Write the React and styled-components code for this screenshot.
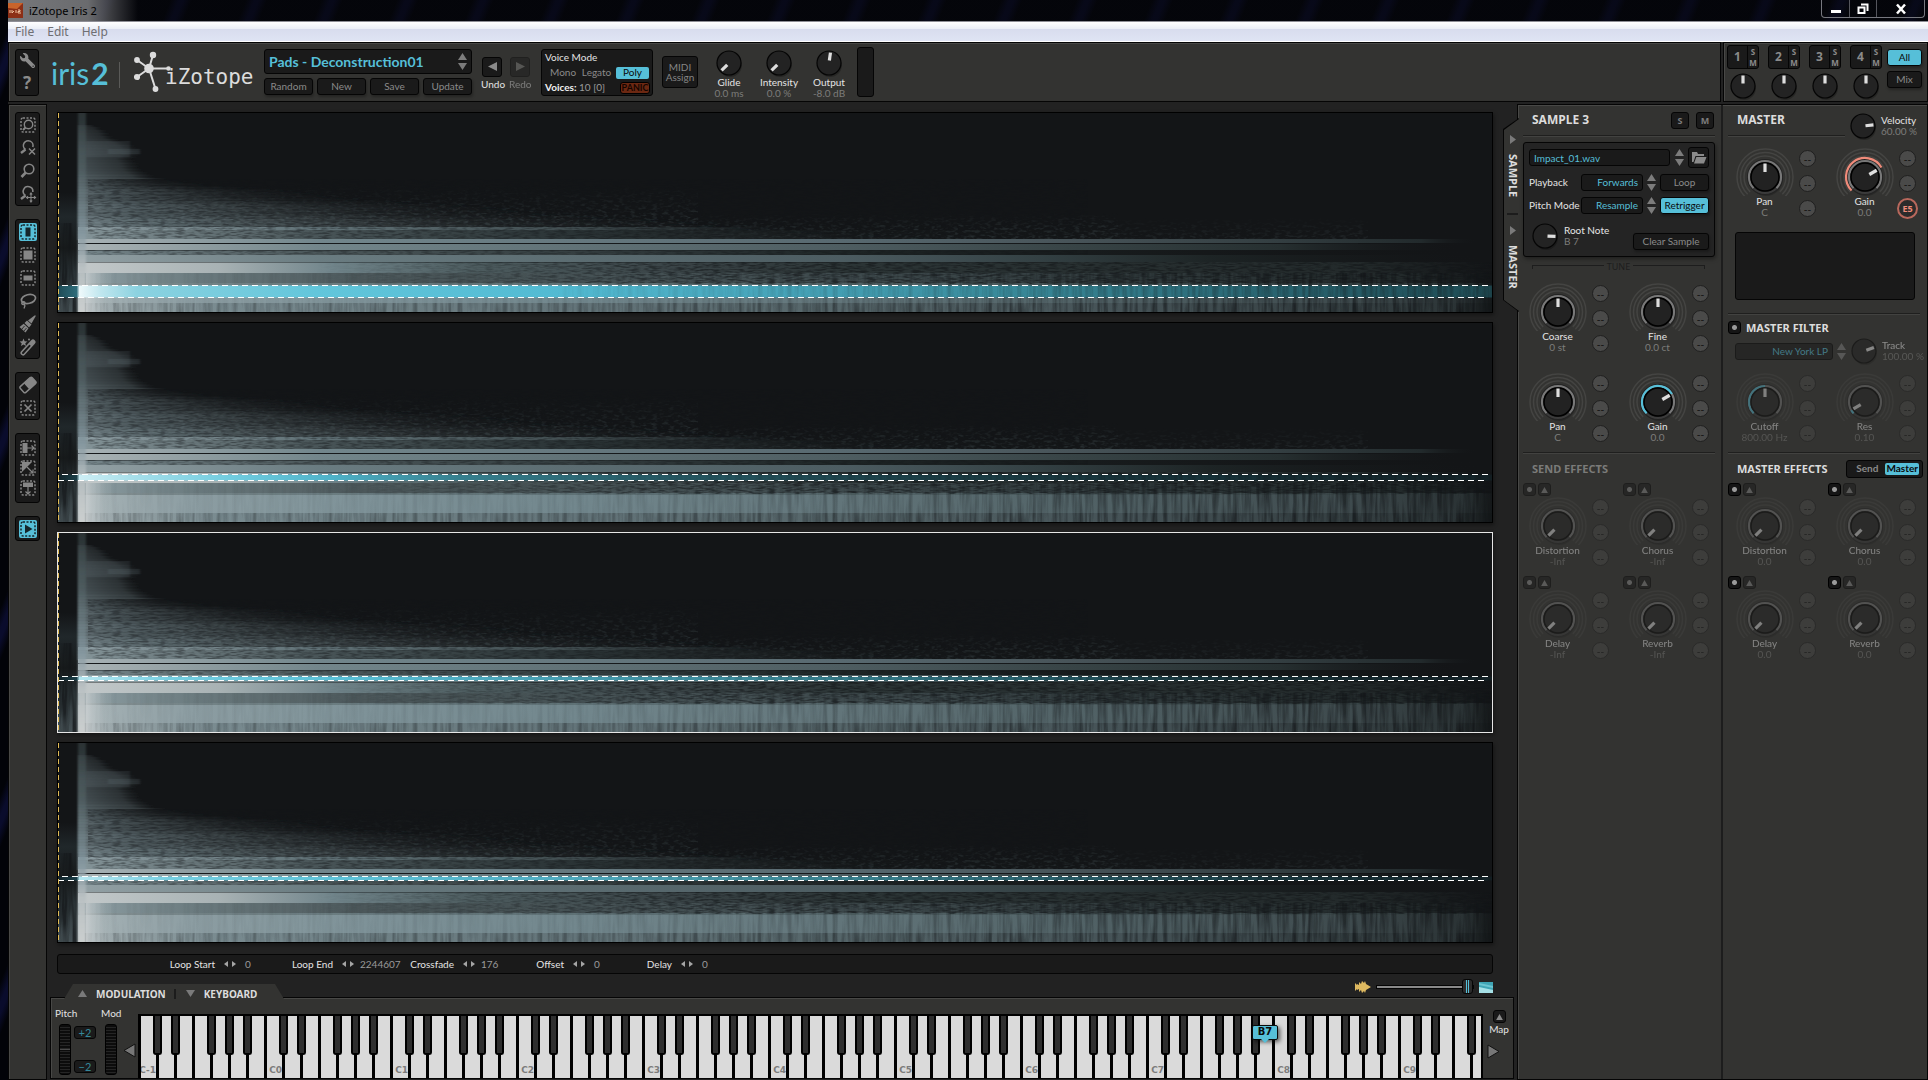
import React, { useState } from 'react';
import styled, { createGlobalStyle, css } from 'styled-components';
import { FaWrench } from 'react-icons/fa';

const CYAN = '#56bfd8';

/* ---------- spectrogram drawing ---------- */

// [top, height, [offset, colour, opacity]...]
const BANDS = [
  [114, 3, [[0, '#94a4a9', 0.8], [0.17, '#617277', 1], [0.35, '#414d50', 1], [0.5, '#2a3335', 0]]],
  [117, 9, [[0, '#87979b', 0.8], [0.17, '#485457', 1], [0.35, '#2a3335', 1], [0.55, '#171b1c', 0.4], [1, '#131517', 0]]],
  [126, 4, [[0, '#a9b3b6', 1], [0.17, '#72868c', 1], [0.54, '#586970', 1], [0.7, '#485459', 1], [0.85, '#333e41', 1], [0.95, '#222a2c', 1], [0.99, '#131517', 0]]],
  [131, 6, [[0, '#aab3b5', 1], [0.17, '#73868b', 1], [0.54, '#4e5d61', 1], [0.7, '#384446', 1], [0.85, '#262f30', 1], [0.98, '#131517', 0]]],
  [137, 5, [[0, '#75858a', 1], [0.17, '#4b575a', 1], [0.42, '#2c3537', 1], [0.55, '#1d2425', 1], [1, '#131517', 0]]],
  [142, 7, [[0, '#93a1a5', 1], [0.17, '#6a7c81', 1], [0.54, '#4c5c61', 1], [0.68, '#334043', 1], [0.8, '#1d2425', 1], [1, '#131517', 0]]],
  [149, 11, [[0, '#c3c9ca', 1], [0.1, '#a8b2b4', 1], [0.18, '#70848a', 1], [0.28, '#4d5c5f', 1], [0.42, '#3a4447', 1], [0.55, '#2b3435', 1], [0.9, '#232a2b', 1], [1, '#131517', 1]]],
  [160, 11, [[0, '#8fa0a5', 1], [0.08, '#6c7c80', 1], [0.2, '#4c585b', 1], [0.54, '#3f4b4e', 1], [0.75, '#303a3c', 1], [0.95, '#212829', 1], [1, '#131517', 1]]],
  [170, 22, [[0, '#a9b5b8', 1], [0.08, '#8c9da2', 1], [0.2, '#7e9298', 1], [0.35, '#72878d', 1], [0.54, '#62757a', 1], [0.7, '#526367', 1], [0.9, '#3e4a4d', 1], [0.98, '#2a3234', 1], [1, '#161a1b', 1]]],
  [190, 10, [[0, '#a3aeb1', 1], [0.1, '#788a8f', 1], [0.35, '#637479', 1], [0.54, '#556569', 1], [0.75, '#445155', 1], [0.97, '#2d3638', 1], [1, '#161a1b', 1]]],
];

const ENVELOPE = [
  [0, 30, 0.1], [12, 40, 0.2], [22, 52, 0.28], [30, 72, 0.34], [40, 88, 0.4], [46, 74, 0.38], [64, 96, 0.48],
  [80, 270, 0.52], [90, 410, 0.56], [100, 560, 0.6], [110, 700, 0.66], [118, 820, 0.74], [127, 980, 0.8],
];

const envelopeAt = (y) => {
  const i = Math.max(1, ENVELOPE.findIndex((p) => p[0] >= y));
  const [y0, e0, a0] = ENVELOPE[i - 1];
  const [y1, e1, a1] = ENVELOPE[i];
  const t = (y - y0) / (y1 - y0);
  return [e0 + (e1 - e0) * t, a0 + (a1 - a0) * t];
};

const HAZE = [];
for (let y = 12; y < 127; y += 1) {
  const [end, alpha] = envelopeAt(y);
  const wobble = Math.sin(y * 12.9898) * 0.5 + Math.sin(y * 4.17) * 0.5;
  HAZE.push({ y, w: end - 20 + wobble * (y > 70 ? 30 : 4), alpha: alpha * (1 + wobble * (y > 60 ? 0.14 : 0.03)) });
}

function SpectroDefs() {
  return (
    <HiddenSvg aria-hidden="true">
      <defs>
        {BANDS.map(([y, , stops]) => (
          <linearGradient id={`band${y}`} key={y}>
            {stops.map(([o, c, a]) => <stop key={o} offset={o} stopColor={c} stopOpacity={a} />)}
          </linearGradient>
        ))}
        <linearGradient id="haze">
          <stop offset="0" stopColor="#93a6ac" />
          <stop offset="0.1" stopColor="#80949a" stopOpacity="0.85" />
          <stop offset="0.35" stopColor="#6c7c80" stopOpacity="0.55" />
          <stop offset="0.6" stopColor="#566366" stopOpacity="0.25" />
          <stop offset="0.8" stopColor="#4a5659" stopOpacity="0.08" />
          <stop offset="1" stopColor="#414b4e" stopOpacity="0" />
        </linearGradient>
        <linearGradient id="hazeTop">
          <stop offset="0" stopColor="#80949a" />
          <stop offset="0.7" stopColor="#6c7c80" stopOpacity="0.6" />
          <stop offset="1" stopColor="#414b4e" stopOpacity="0" />
        </linearGradient>
        <linearGradient id="lead" x2="0" y2="1">
          <stop offset="0.4" stopColor="#131517" />
          <stop offset="0.52" stopColor="#20272a" />
          <stop offset="0.68" stopColor="#171a1b" />
          <stop offset="0.8" stopColor="#2c3538" />
          <stop offset="1" stopColor="#465155" />
        </linearGradient>
        <linearGradient id="attack" x2="0" y2="1">
          <stop offset="0" stopColor="#3a4648" stopOpacity="0.6" />
          <stop offset="0.3" stopColor="#566669" stopOpacity="0.6" />
          <stop offset="0.6" stopColor="#8497a0" stopOpacity="0.7" />
          <stop offset="0.78" stopColor="#b9c0c2" stopOpacity="0.9" />
          <stop offset="1" stopColor="#cbcfcf" />
        </linearGradient>
        <linearGradient id="afterglow">
          <stop offset="0" stopColor="#d5d9da" stopOpacity="0.7" />
          <stop offset="1" stopColor="#a5b2b5" stopOpacity="0" />
        </linearGradient>
        <linearGradient id="tail">
          <stop offset="0" stopColor="#fff" stopOpacity="0.06" />
          <stop offset="0.35" stopColor="#fff" stopOpacity="0.12" />
          <stop offset="0.65" stopColor="#fff" stopOpacity="0.45" />
          <stop offset="1" stopColor="#fff" />
        </linearGradient>
        <linearGradient id="rise">
          <stop offset="0.18" stopColor="#fff" stopOpacity="0" />
          <stop offset="0.45" stopColor="#fff" />
        </linearGradient>
        <linearGradient id="mistV" x2="0" y2="1">
          <stop offset="0" stopColor="#5a6c70" stopOpacity="0" />
          <stop offset="1" stopColor="#5a6c70" stopOpacity="0.38" />
        </linearGradient>
        <mask id="tailMask"><rect width="1434" height="199" fill="url(#tail)" /></mask>
        <mask id="riseMask"><rect width="1434" height="199" fill="url(#rise)" /></mask>
        <filter id="soft" x="-5%" y="-5%" width="110%" height="110%"><feGaussianBlur stdDeviation="1 0.4" /></filter>
        <filter id="softer" x="-20%" y="-5%" width="140%" height="110%"><feGaussianBlur stdDeviation="1 0" /></filter>
        <filter id="grain" x="0" y="0" width="100%" height="100%" colorInterpolationFilters="sRGB">
          <feTurbulence type="fractalNoise" baseFrequency="0.11 0.6" numOctaves="2" seed="4" />
          <feColorMatrix values="0 0 0 0 0.07  0 0 0 0 0.08  0 0 0 0 0.09  3.4 0 0 0 -1.4" />
        </filter>
        <filter id="streaks" x="0" y="0" width="100%" height="100%" colorInterpolationFilters="sRGB">
          <feTurbulence type="fractalNoise" baseFrequency="0.2 0.016" numOctaves="3" seed="9" />
          <feColorMatrix values="0 0 0 0 0.07  0 0 0 0 0.08  0 0 0 0 0.09  2.8 0 0 0 -1.1" />
        </filter>
        <filter id="mist" x="0" y="0" width="100%" height="100%" colorInterpolationFilters="sRGB">
          <feTurbulence type="fractalNoise" baseFrequency="0.18 0.4" numOctaves="2" seed="21" result="n" />
          <feColorMatrix in="n" values="0 0 0 0 1  0 0 0 0 1  0 0 0 0 1  0 3.6 0 0 -1.7" result="m" />
          <feComposite in="SourceGraphic" in2="m" operator="in" />
        </filter>
      </defs>
    </HiddenSvg>
  );
}

function Spectrogram({ id, top, height, tones }) {
  return (
    <SpectroSvg viewBox="0 0 1434 199" preserveAspectRatio="none" role="img" aria-label={`Sample ${id} spectrogram`}>
      <linearGradient id={`sel${id}`}>
        {tones.map(([o, c]) => <stop key={o} offset={o} stopColor={c} />)}
      </linearGradient>
      <rect width="1434" height="199" fill="#131517" />
      <rect width="21" height="199" fill="url(#lead)" />
      <rect x="90" y="72" width="550" height="54" fill="url(#mistV)" filter="url(#mist)" />
      <rect x="640" y="100" width="420" height="26" fill="url(#mistV)" filter="url(#mist)" />
      <rect x="1060" y="104" width="250" height="22" fill="url(#mistV)" filter="url(#mist)" opacity="0.5" />
      <g filter="url(#soft)">
        {HAZE.map((h) => (
          <rect key={h.y} x="20" y={h.y} width={h.w} height="1.2" fill={h.y < 66 ? 'url(#hazeTop)' : 'url(#haze)'} opacity={h.alpha} />
        ))}
        <rect x="28" y="28" width="44" height="16" fill="#6f8286" opacity="0.14" />
        <rect x="50" y="36" width="32" height="5" fill="#6f8286" opacity="0.16" />
      </g>
      {BANDS.map(([y, h]) => <rect key={y} x="20" y={y} width="1414" height={h} fill={`url(#band${y})`} />)}
      <path d="M20 130.500H1300M20 137.500H900M20 149.500H1000" stroke="#1a2022" strokeOpacity="0.45" />
      <path d="M20 170.500H1400M20 171.500H1400" stroke="#2c3639" strokeOpacity="0.25" />
      <rect x="30" y="66" width="1000" height="60" filter="url(#grain)" opacity="0.38" />
      <rect x="30" y="137" width="1000" height="5" filter="url(#grain)" opacity="0.3" />
      <g mask="url(#riseMask)"><rect x="20" y="149" width="1414" height="22" filter="url(#grain)" opacity="0.55" /></g>
      <g mask="url(#tailMask)"><rect x="20" y="160" width="1414" height="39" filter="url(#streaks)" opacity="0.7" /></g>
      <rect x="20" y="190" width="1414" height="9" filter="url(#streaks)" opacity="0.24" />
      <rect x="0" y="110" width="20" height="89" filter="url(#streaks)" opacity="0.7" />
      <rect x="28" y="160" width="30" height="39" fill="url(#afterglow)" />
      <rect x="20" width="8" height="199" fill="url(#attack)" filter="url(#softer)" />
      <rect y={top} width="1434" height={height} fill={`url(#sel${id})`} />
      <g mask="url(#tailMask)"><rect x="500" y={top} width="934" height={height} filter="url(#streaks)" opacity="0.4" /></g>
      <path d={`M4 ${top}H1434`} stroke="#fff" strokeDasharray="6 4" />
      <path d={`M0 ${top + height}H1428`} stroke="#fff" strokeDasharray="6 4" />
      <path d="M0.500 0V199" stroke="#e2bb55" strokeDasharray="5 3" />
    </SpectroSvg>
  );
}

const TRACKS = [
  { id: 1, top: 172.5, height: 12, tones: [[0, '#1f4b56'], [0.013, '#2f6c7a'], [0.015, '#eef9fb'], [0.03, '#bfe6ee'], [0.055, '#8cd2e0'], [0.18, '#62c6db'], [0.34, '#53bbd3'], [0.54, '#449fb3'], [0.66, '#398a9a'], [0.85, '#296470'], [1, '#1f4b53']] },
  { id: 2, top: 151.5, height: 6, tones: [[0, '#132329'], [0.013, '#1b3f48'], [0.015, '#cdeef5'], [0.05, '#a9e0eb'], [0.12, '#71cde0'], [0.19, '#4fb3c9'], [0.28, '#36808f'], [0.42, '#265964'], [0.6, '#1b3e46'], [0.8, '#173239'], [1, '#142328']] },
  { id: 3, top: 143.5, height: 4, selected: true, tones: [[0, '#132329'], [0.013, '#1b3f48'], [0.015, '#b6e7f1'], [0.08, '#74cee1'], [0.2, '#58bfd6'], [0.34, '#479fb3'], [0.5, '#3a8797'], [0.68, '#27606c'], [0.8, '#18363d'], [1, '#142328']] },
  { id: 4, top: 133.5, height: 4, tones: [[0, '#132329'], [0.013, '#1b3f48'], [0.015, '#b6e7f1'], [0.08, '#74cee1'], [0.2, '#5cc2d8'], [0.34, '#50adc2'], [0.5, '#40909f'], [0.68, '#2b6571'], [0.85, '#1a3b42'], [1, '#142328']] },
];

/* ---------- knobs ---------- */

const polar = (c, r, deg) => {
  const a = ((deg - 90) * Math.PI) / 180;
  return `${(c + r * Math.cos(a)).toFixed(2)} ${(c + r * Math.sin(a)).toFixed(2)}`;
};
const arc = (c, r, from, to) => `M${polar(c, r, from)}A${r} ${r} 0 ${to - from > 180 ? 1 : 0} 1 ${polar(c, r, to)}`;

function SmallKnob({ name, angle = 0 }) {
  return (
    <KnobHit>
      <svg width="28" height="28" viewBox="0 0 28 28">
        <circle cx="15" cy="16" r="12" fill="#000" opacity="0.25" />
        <circle cx="14" cy="14" r="12" fill="#232323" stroke="#050505" strokeWidth="1.200" />
        <path d={`M${polar(14, 2.5, angle)}L${polar(14, 10.5, angle)}`} stroke="#dedede" strokeWidth="3.200" />
      </svg>
      <RangeOverlay type="range" aria-label={name} defaultValue="50" />
    </KnobHit>
  );
}

function BigKnob({ name, angle, ring, from = -135 }) {
  return (
    <KnobHit>
      <svg width="58" height="48" viewBox="0 0 58 48">
        {[28, 24.5, 21].map((r) => <path key={r} d={arc(29, r, -135, 135)} fill="none" stroke="#444442" strokeWidth="1.500" />)}
        <circle cx="30" cy="31" r="17" fill="#000" opacity="0.2" />
        <circle cx="29" cy="29" r="18" fill="#232323" />
        <path d={arc(29, 16, -135, 135)} fill="none" stroke="#787878" strokeWidth="2.200" />
        <path d={arc(29, 16, 136, 224)} fill="none" stroke="#3b3b3b" strokeWidth="2.200" />
        {ring && <path d={arc(29, ring === '#f08b7a' ? 19 : 16, from, angle)} fill="none" stroke={ring} strokeWidth="2.200" />}
        <circle cx="29" cy="29" r="14" fill="#222" stroke="#000" strokeWidth="1.500" />
        <path d={`M${polar(29, 5, angle)}L${polar(29, 13.5, angle)}`} stroke="#dedede" strokeWidth="3.200" />
      </svg>
      <RangeOverlay type="range" aria-label={name} defaultValue="50" />
    </KnobHit>
  );
}

function KnobCell({ name, value, angle = 0, ring, tag, dim }) {
  return (
    <Cell $dim={dim}>
      <CellMain>
        <BigKnob name={name} angle={angle} ring={ring} />
        <Caption>{name}</Caption>
        <Reading>{value}</Reading>
      </CellMain>
      <ModSlots>
        <ModSlot>--</ModSlot>
        <ModSlot>--</ModSlot>
        <ModSlot $tag={tag}>{tag || '--'}</ModSlot>
      </ModSlots>
    </Cell>
  );
}

function EffectCell({ on, ...knob }) {
  return (
    <div>
      <Switches>
        <Power $on={on} aria-label={`${knob.name} power`} />
        <Expand aria-label={`${knob.name} details`}><Triangle /></Expand>
      </Switches>
      <KnobCell angle={-135} dim {...knob} />
    </div>
  );
}

/* ---------- small drawings ---------- */

const Triangle = () => <svg width="9" height="8" viewBox="0 0 9 8"><path d="M4.500 0L9 8H0z" fill="currentColor" /></svg>;

function Stepper({ label, dim }) {
  return (
    <StepperBox $dim={dim}>
      <button aria-label={`${label} up`}><svg width="9" height="8"><path d="M4.500 0L9 7H0z" fill="currentColor" /></svg></button>
      <button aria-label={`${label} down`}><svg width="9" height="8"><path d="M4.500 8L9 1H0z" fill="currentColor" /></svg></button>
    </StepperBox>
  );
}

const Marquee = <rect x="2" y="2" width="14" height="14" rx="2" fill="none" stroke="currentColor" strokeWidth="1.500" strokeDasharray="2 1.500" />;
const Lens = <><circle cx="10" cy="7" r="4.800" fill="none" stroke="currentColor" strokeWidth="1.600" /><path d="M6.800 10.500L2.500 15" stroke="currentColor" strokeWidth="2.600" /></>;

const TOOL_GROUPS = [
  { h: 23, tools: [
    ['Zoom to selection', <>{Marquee}<circle cx="9.500" cy="8.500" r="4.200" fill="none" stroke="currentColor" strokeWidth="1.400" /><path d="M6.500 11.500L4 14" stroke="currentColor" strokeWidth="2" /></>],
    ['Zoom out', <><path d="M6.500 10.500A4.800 4.800 0 1 1 13.800 8" fill="none" stroke="currentColor" strokeWidth="1.600" /><path d="M6.500 10.500L2 14" stroke="currentColor" strokeWidth="2.400" /><path d="M10 9.500L16 15.500M16 9.500L10 15.500" stroke="currentColor" strokeWidth="1.500" /></>],
    ['Zoom', Lens],
    ['Grab', <><path d="M6.500 10.500A4.800 4.800 0 1 1 13.800 7" fill="none" stroke="currentColor" strokeWidth="1.600" /><path d="M6.500 10.500L2 14" stroke="currentColor" strokeWidth="2.400" /><path d="M12 8.500V16.500M8 12.500H16M10.800 9.500L12 8L13.200 9.500M10.800 15.500L12 17L13.200 15.500M9 11.300L7.500 12.500L9 13.700M15 11.300L16.500 12.500L15 13.700" fill="none" stroke="currentColor" strokeWidth="1.100" /></>],
  ] },
  { h: 23, tools: [
    ['Time selection', <>{Marquee}<path d="M6.500 4.500H11.500V13.500H6.500z" fill="currentColor" /></>, true],
    ['Time and frequency selection', <>{Marquee}<path d="M4.500 4.500H13.500V13.500H4.500z" fill="currentColor" /></>],
    ['Frequency selection', <>{Marquee}<path d="M4.500 6.500H13.500V11.500H4.500z" fill="currentColor" /></>],
    ['Lasso', <><ellipse cx="9.500" cy="7" rx="7.200" ry="4.400" transform="rotate(-14 9.500 7)" fill="none" stroke="currentColor" strokeWidth="1.700" /><path d="M3 10C6 9 7 11 5 12.500C3 13 2 11 3.500 10.500M5.500 12Q6.500 14 5 16.500" fill="none" stroke="currentColor" strokeWidth="1.400" /></>],
    ['Brush', <><path d="M17 0.500L12.500 8.500L9 5.500L15.500 0.500z" fill="currentColor" /><path d="M8 5.500L12.500 9.500L10 12.500L5.500 8z" fill="currentColor" /><path d="M4.700 8.800L9.500 13.200L6.500 17.500L0.500 12z" fill="currentColor" /><path d="M3 14L5.500 11M5 16L7.500 13" stroke="#1a1a1a" strokeWidth="0.800" /></>],
    ['Magic wand', <><path d="M14 4L4 15" stroke="currentColor" strokeWidth="5" strokeLinecap="round" /><path d="M10.500 7.800L4 15" stroke="#1a1a1a" strokeWidth="2" strokeLinecap="round" /><path d="M4.500 0.500L5.600 3.200L8.500 3.400L6.300 5.200L7 8L4.500 6.500L2 8L2.700 5.200L0.500 3.400L3.400 3.200z" fill="currentColor" /><circle cx="10" cy="1.500" r="1" fill="currentColor" /></>],
  ] },
  { h: 23, tools: [
    ['Eraser', <><rect x="1" y="5" width="16" height="8" rx="1.500" transform="rotate(-42 9 9)" fill="none" stroke="currentColor" strokeWidth="1.500" /><rect x="7" y="5" width="10" height="8" rx="1" transform="rotate(-42 9 9)" fill="currentColor" /></>],
    ['Clear selection', <>{Marquee}<path d="M5.500 5.500L12.500 12.500M12.500 5.500L5.500 12.500" stroke="currentColor" strokeWidth="1.700" /></>],
  ] },
  { h: 20, top: 4, tools: [
    ['Expand in time', <>{Marquee}<path d="M3.500 4H8.500V14H3.500z" fill="currentColor" /><path d="M6 9H15M12.500 6.500L15 9L12.500 11.500" fill="none" stroke="currentColor" strokeWidth="1.200" /></>],
    ['Expand both', <>{Marquee}<path d="M3 3H13L3 13z" fill="currentColor" /><path d="M8 8L14 14M14 10.500V14H10.500" fill="none" stroke="currentColor" strokeWidth="1.200" /></>],
    ['Expand in frequency', <>{Marquee}<path d="M4 3.500H14V8H4z" fill="currentColor" /><path d="M9 6V15M6.500 12.500L9 15L11.500 12.500" fill="none" stroke="currentColor" strokeWidth="1.200" /></>],
  ] },
  { h: 23, tools: [
    ['Play selection', <>{Marquee}<path d="M6 4.500L13.500 9L6 13.500z" fill="currentColor" /></>, true],
  ] },
];

const LOOP_FIELDS = [
  ['Loop Start', '0', 157], ['Loop End', '2244607', 51], ['Crossfade', '176', 54], ['Offset', '0', 43], ['Delay', '0', 41],
];

const WHITE_KEYS = Array.from({ length: 75 }, (_, i) => ({
  n: i,
  sharp: ![2, 6].includes(i % 7),
  label: i % 7 === 0 ? `C${i / 7 - 1}` : '',
}));

export default function App() {
  const [mode, setMode] = useState('Poly');
  const [scope, setScope] = useState('All');
  const [fx, setFx] = useState('Master');

  return (
    <Desktop>
      <GlobalStyle />
      <SpectroDefs />
      <TitleBar>
        <AppIcon viewBox="0 0 15 15"><rect width="15" height="15" fill="#8c2f16" /><path d="M0 0H15L9 6L0 5z" fill="#c8642c" /><path d="M2 7V10M4 7V10L6 8M8 7V10M10 7H12V8.500H10V10H13" stroke="#efc3a0" fill="none" /></AppIcon>
        <TitleText>iZotope Iris 2</TitleText>
        <WindowButtons>
          <WinButton aria-label="Minimize" $w={28}><svg width="12" height="12"><path d="M1 8.500H11" stroke="#fff" strokeWidth="3" /></svg></WinButton>
          <WinButton aria-label="Restore" $w={27}><svg width="12" height="12"><path d="M4 1.500H10.500V8M1.500 4.500H7.500V10H1.500z" fill="none" stroke="#fff" strokeWidth="2" /></svg></WinButton>
          <WinButton aria-label="Close" $w={47}><svg width="12" height="12"><path d="M2 1.500L10 10.500M10 1.500L2 10.500" stroke="#fff" strokeWidth="2.500" /></svg></WinButton>
        </WindowButtons>
      </TitleBar>
      <MenuBar>
        <a href="#file">File</a>
        <a href="#edit">Edit</a>
        <a href="#help">Help</a>
      </MenuBar>

      <Plugin>
        <Header>
          <HeaderMain>
            <HelpBox>
              <button aria-label="Options"><FlippedWrench size={15} /></button>
              <button aria-label="Help">?</button>
            </HelpBox>
            <IrisLogo>iris<b>2</b></IrisLogo>
            <LogoRule />
            <Brand>
              <svg width="37" height="42" viewBox="0 0 37 42">
                <g stroke="#dcdcdc" strokeWidth="2" fill="#dcdcdc">
                  <path d="M15 17.500L19 4M15 17.500L3 9M15 17.500H35M15 17.500L3 26M15 17.500L21.500 38" />
                  <circle cx="15" cy="17.500" r="3.800" /><circle cx="19" cy="4" r="2.200" /><circle cx="3" cy="9" r="1.900" />
                  <circle cx="34.500" cy="17.500" r="1.300" /><circle cx="3" cy="26" r="2.100" /><circle cx="21.500" cy="38" r="1.900" />
                </g>
              </svg>
              <BrandText>iZotope</BrandText>
            </Brand>
            <Presets>
              <PresetField>
                <select aria-label="Preset"><option>Pads - Deconstruction01</option></select>
                <Stepper label="Preset" />
              </PresetField>
              <PresetButtons>
                {['Random', 'New', 'Save', 'Update'].map((t) => <DarkButton key={t}>{t}</DarkButton>)}
              </PresetButtons>
            </Presets>
            <History>
              <div><ArrowButton aria-label="Undo"><svg width="9" height="9"><path d="M9 0V9L0 4.500z" fill="currentColor" /></svg></ArrowButton><Caption>Undo</Caption></div>
              <FadedStep><ArrowButton aria-label="Redo"><svg width="9" height="9"><path d="M0 0V9L9 4.500z" fill="currentColor" /></svg></ArrowButton><Caption>Redo</Caption></FadedStep>
            </History>
            <VoiceBox>
              <VoiceTitle>Voice Mode</VoiceTitle>
              <VoiceModes>
                {['Mono', 'Legato', 'Poly'].map((m) => <ModeButton key={m} $on={m === mode} onClick={() => setMode(m)}>{m}</ModeButton>)}
              </VoiceModes>
              <VoiceRow><span><b>Voices:</b> 10 [0]</span><Panic>PANIC</Panic></VoiceRow>
            </VoiceBox>
            <MidiButton>MIDI<br />Assign</MidiButton>
            <HeaderKnobs>
              <div><SmallKnob name="Glide" angle={-135} /><Caption>Glide</Caption><Reading>0.0 ms</Reading></div>
              <div><SmallKnob name="Intensity" angle={-135} /><Caption>Intensity</Caption><Reading>0.0 %</Reading></div>
              <div><SmallKnob name="Output" angle={8} /><Caption>Output</Caption><Reading>-8.0 dB</Reading></div>
            </HeaderKnobs>
            <Meter />
          </HeaderMain>
          <HeaderSlots>
            {[1, 2, 3, 4].map((n) => (
              <Slot key={n}>
                <SlotBox><button>{n}</button><SlotToggles><button>S</button><button>M</button></SlotToggles></SlotBox>
                <SmallKnob name={`Sample ${n} level`} />
              </Slot>
            ))}
            <SlotScope>
              {['All', 'Mix'].map((s) => <DarkButton key={s} $on={s === scope} onClick={() => setScope(s)}>{s}</DarkButton>)}
            </SlotScope>
          </HeaderSlots>
        </Header>

        <Body>
          <ToolStrip>
            {TOOL_GROUPS.map((g, i) => (
              <ToolGroup key={i} $pad={g.top}>
                {g.tools.map(([name, icon, on]) => (
                  <ToolButton key={name} aria-label={name} $h={g.h} $on={on}>
                    <svg width="18" height="18" viewBox="0 0 18 18">{icon}</svg>
                  </ToolButton>
                ))}
              </ToolGroup>
            ))}
          </ToolStrip>

          <Stage>
            <Tracks>
              {TRACKS.map((t) => <Track key={t.id} $selected={t.selected}><Spectrogram {...t} /></Track>)}
            </Tracks>
            <LoopBar>
              {LOOP_FIELDS.map(([name, value, w]) => (
                <LoopField key={name}>
                  <LoopLabel $w={w}>{name}</LoopLabel>
                  <NudgeButtons>
                    <button aria-label={`${name} down`}><svg width="4" height="6"><path d="M4 0V6L0 3z" fill="currentColor" /></svg></button>
                    <button aria-label={`${name} up`}><svg width="4" height="6"><path d="M0 0V6L4 3z" fill="currentColor" /></svg></button>
                  </NudgeButtons>
                  <LoopValue $wide={value.length > 1}>{value}</LoopValue>
                </LoopField>
              ))}
            </LoopBar>
            <DockTop>
              <DockTabs>
                <DockTab href="#modulation"><svg width="9" height="7"><path d="M4.500 0L9 7H0z" fill="#7a7a7a" /></svg>MODULATION</DockTab>
                <TabRule />
                <DockTab href="#keyboard"><svg width="9" height="7"><path d="M0 0H9L4.500 7z" fill="#7a7a7a" /></svg>KEYBOARD</DockTab>
              </DockTabs>
              <ViewMix>
                <svg width="16" height="14" viewBox="0 0 16 14"><path d="M0 3L2 5V4L4 5V2L6 4L7 1L9 3L10 1L11 4L16 7L11 10L10 13L9 11L7 13L6 10L4 12V9L2 10V9L0 11z" fill="#deb960" /></svg>
                <MixSlider type="range" aria-label="Waveform and spectrogram balance" defaultValue="100" />
                <svg width="14" height="11"><rect width="14" height="11" fill="#3fa5b5" /><path d="M0 5L14 8V11H0z" fill="#a6e0e6" /><path d="M0 1L14 4V6L0 3z" fill="#6cc5d1" /></svg>
              </ViewMix>
            </DockTop>
            <Dock>
              <Wheel><Caption>Pitch</Caption><WheelRow><WheelStrip $mid /><Bend><BendButton>+2</BendButton><BendButton>−2</BendButton></Bend></WheelRow></Wheel>
              <ModWheel><Caption>Mod</Caption><WheelStrip /></ModWheel>
              <OctaveButton aria-label="Octave down"><svg width="13" height="15"><path d="M12 1V14L1 7.500z" fill="#777" stroke="#111" /></svg></OctaveButton>
              <Keys>
                {WHITE_KEYS.map((k) => (
                  <WhiteKey key={k.n} aria-label={`Key ${k.n}`}>
                    {k.label && <KeyLabel>{k.label}</KeyLabel>}
                    {k.sharp && <BlackKey />}
                    {k.n === 62 && <RootTag>B7</RootTag>}
                  </WhiteKey>
                ))}
              </Keys>
              <MapSide>
                <Expand $bright aria-label="Map"><Triangle /></Expand>
                <Caption>Map</Caption>
                <OctaveUp aria-label="Octave up"><svg width="13" height="15"><path d="M1 1V14L12 7.500z" fill="#777" stroke="#111" /></svg></OctaveUp>
              </MapSide>
            </Dock>
          </Stage>

          <SidePanel>
            <SideTabs>
              <SideTab href="#sample"><svg width="6" height="9"><path d="M0 0V9L6 4.500z" fill="#7a7a7a" /></svg>SAMPLE</SideTab>
              <SideRule />
              <SideTab href="#master"><svg width="6" height="9"><path d="M0 0V9L6 4.500z" fill="#7a7a7a" /></svg>MASTER</SideTab>
            </SideTabs>

            <SampleColumn>
              <TitleRow>
                <PanelTitle>SAMPLE 3</PanelTitle>
                <SoloMute><SquareButton>S</SquareButton><SquareButton>M</SquareButton></SoloMute>
              </TitleRow>
              <Rule />
              <SampleBox>
                <FileRow>
                  <FileInput aria-label="Sample file" defaultValue="Impact_01.wav" />
                  <Stepper label="Sample file" />
                  <FolderButton aria-label="Browse"><svg width="16" height="13" viewBox="0 0 16 13"><path d="M1 11V1H6L7 3H13V5H4.500L2.500 11z" fill="#8a8a8a" /><path d="M5.300 6H15.500L13 12.500H3z" fill="#8a8a8a" /></svg></FolderButton>
                </FileRow>
                <OptionRow>
                  <label htmlFor="playback">Playback</label>
                  <DarkSelect id="playback"><option>Forwards</option></DarkSelect>
                  <Stepper label="Playback" />
                  <DarkButton>Loop</DarkButton>
                </OptionRow>
                <OptionRow>
                  <label htmlFor="pitchmode">Pitch Mode</label>
                  <DarkSelect id="pitchmode"><option>Resample</option></DarkSelect>
                  <Stepper label="Pitch mode" />
                  <DarkButton $on>Retrigger</DarkButton>
                </OptionRow>
                <RootRow>
                  <SmallKnob name="Root Note" angle={92} />
                  <RootText><Caption>Root Note</Caption><Reading>B 7</Reading></RootText>
                  <DarkButton>Clear Sample</DarkButton>
                </RootRow>
              </SampleBox>
              <TuneRow><i /><span>TUNE</span><i /></TuneRow>
              <KnobGrid>
                <KnobCell name="Coarse" value="0 st" />
                <KnobCell name="Fine" value="0.0 ct" />
                <KnobCell name="Pan" value="C" />
                <KnobCell name="Gain" value="0.0" angle={60} ring={CYAN} />
              </KnobGrid>
              <Rule />
              <EffectTitle $dim>SEND EFFECTS</EffectTitle>
              <EffectGrid>
                {['Distortion', 'Chorus', 'Delay', 'Reverb'].map((n) => <EffectCell key={n} name={n} value="-Inf" />)}
              </EffectGrid>
            </SampleColumn>

            <MasterColumn>
              <MasterTop>
                <div><PanelTitle>MASTER</PanelTitle><Rule /></div>
                <SmallKnob name="Velocity" angle={84} />
                <div><Caption>Velocity</Caption><Reading>60.00 %</Reading></div>
              </MasterTop>
              <KnobGrid>
                <KnobCell name="Pan" value="C" />
                <KnobCell name="Gain" value="0.0" angle={60} ring="#f08b7a" tag="E5" />
              </KnobGrid>
              <Screen />
              <Rule />
              <FilterTitle><Power $on aria-label="Master filter power" />MASTER FILTER</FilterTitle>
              <FilterRow>
                <DarkSelect aria-label="Filter type"><option>New York LP</option></DarkSelect>
                <Stepper label="Filter type" />
                <SmallKnob name="Track" angle={70} />
                <div><Caption>Track</Caption><Reading>100.00 %</Reading></div>
              </FilterRow>
              <KnobGrid>
                <KnobCell dim name="Cutoff" value="800.00 Hz" ring={CYAN} />
                <KnobCell dim name="Res" value="0.10" angle={-121} ring={CYAN} />
              </KnobGrid>
              <Rule />
              <EffectTitle>
                MASTER EFFECTS
                <FxSwitch>{['Send', 'Master'].map((t) => <ModeButton key={t} $on={t === fx} onClick={() => setFx(t)}>{t}</ModeButton>)}</FxSwitch>
              </EffectTitle>
              <EffectGrid>
                {['Distortion', 'Chorus', 'Delay', 'Reverb'].map((n) => <EffectCell key={n} name={n} value="0.0" on />)}
              </EffectGrid>
            </MasterColumn>
          </SidePanel>
        </Body>
      </Plugin>
    </Desktop>
  );
}

/* ---------- styles ---------- */

const GlobalStyle = createGlobalStyle`
  *, *::before, *::after {
    box-sizing: border-box;
  }

  body {
    margin: 0;
    background: #04050c;
    color: #e4e4e4;
    font: 10px/11px Lato, "Noto Sans", sans-serif;
  }

  button, input, select {
    font: inherit;
    color: inherit;
    margin: 0;
    padding: 0;
    border: 0;
    background: none;
  }

  a {
    color: inherit;
    text-decoration: none;
  }

  svg {
    display: block;
    flex: none;
  }
`;

const inset = css`
  background: #1a1a1a;
  border: 1px solid #050505;
  border-radius: 3px;
`;

const raised = css`
  background: #333331;
  border: 1px solid #050505;
  box-shadow: inset 1px 1px 0 #484846;
`;

const HiddenSvg = styled.svg`
  position: absolute;
  width: 0;
  height: 0;
`;

const Desktop = styled.div`
  min-height: 100vh;
  display: flex;
  flex-direction: column;
  padding-left: 8px;
  background: repeating-linear-gradient(112deg, #020308 0 18px, #0a0c2c 26px 30px, #020308 38px 70px);
`;

const TitleBar = styled.header`
  height: 21px;
  display: flex;
  align-items: center;
  background: linear-gradient(90deg, #77787b, #6a6b6e 80px, rgba(6, 7, 12, 0.6) 130px);
`;

const AppIcon = styled.svg`
  width: 15px;
  height: 15px;
`;

const TitleText = styled.span`
  margin-left: 4px;
  padding: 0 2px;
  color: #000;
  font: 11px/16px "Noto Sans", sans-serif;
`;

const WindowButtons = styled.div`
  align-self: flex-start;
  display: flex;
  margin: 0 3px 0 auto;
  border: 1px solid #77787f;
  border-top: 0;
  border-radius: 0 0 4px 4px;
`;

const WinButton = styled.button`
  width: ${(p) => p.$w}px;
  height: 17px;
  display: grid;
  place-items: center;
  border-right: 1px solid #55565d;

  &:last-child {
    border-right: 0;
  }
`;

const MenuBar = styled.nav`
  height: 21px;
  display: flex;
  align-items: center;
  gap: 13px;
  padding: 1px 7px 0;
  border-top: 1px solid #8e8e96;
  border-bottom: 1px solid #fff;
  background: linear-gradient(#fff, #eceff7 35%, #d8dcee 36%, #dfe4f4);
  color: #6f6f72;
  font: 12px/16px "Noto Sans", sans-serif;
`;

const Plugin = styled.main`
  flex: 1;
  display: flex;
  flex-direction: column;
  gap: 2px;
  background: #222;
`;

const Header = styled.div`
  display: flex;
  gap: 2px;
`;

const HeaderMain = styled.div`
  ${raised}
  flex: 1;
  height: 60px;
  display: flex;
  align-items: center;
  padding-left: 6px;
`;

const HelpBox = styled.div`
  ${inset}
  width: 24px;
  height: 47px;
  display: flex;
  flex-direction: column;
  align-items: center;
  justify-content: space-around;
  color: #8b8b8b;
  font: bold 17px/17px "Noto Sans", sans-serif;
`;

const FlippedWrench = styled(FaWrench)`
  transform: scaleX(-1);
`;

const IrisLogo = styled.div`
  width: 58px;
  margin: 2px 10px 0 12px;
  color: ${CYAN};
  font: 30px/30px Lato, sans-serif;
  white-space: nowrap;

  b {
    margin-left: 2px;
  }
`;

const LogoRule = styled.div`
  width: 1px;
  height: 26px;
  margin: 5px 14px 0 0;
  background: #5a5a58;
`;

const Brand = styled.div`
  display: flex;
  align-items: flex-end;
  width: 130px;
`;

const BrandText = styled.span`
  margin: 0 0 4px -6px;
  color: #dcdcdc;
  font: 21px/24px "DejaVu Sans Mono", monospace;
`;

const Presets = styled.div`
  width: 208px;
  display: grid;
  gap: 4px;
`;

const PresetField = styled.div`
  ${inset}
  height: 25px;
  display: flex;
  align-items: center;
  padding: 0 4px;

  select {
    flex: 1;
    appearance: none;
    color: ${CYAN};
    font: bold 14px/20px Lato, sans-serif;
  }
`;

const PresetButtons = styled.div`
  display: grid;
  grid-template-columns: repeat(4, 1fr);
  gap: 4px;
`;

const DarkButton = styled.button`
  ${inset}
  height: 17px;
  color: #8a8a8a;
  box-shadow: 1px 2px 3px rgba(0, 0, 0, 0.3);

  ${(p) => p.$on && css`
    background: ${CYAN};
    color: #0a0a0a;
  `}
`;

const StepperBox = styled.div`
  width: 9px;
  display: grid;
  gap: 1px;
  color: #7c7c7c;
  opacity: ${(p) => (p.$dim ? 0.5 : 1)};

  button {
    display: block;
  }
`;

const Caption = styled.div`
  height: 11px;
  color: #e4e4e4;
  text-align: inherit;
  white-space: nowrap;
`;

const Reading = styled.div`
  height: 11px;
  color: #7d7d7b;
  white-space: nowrap;
`;

const History = styled.div`
  display: grid;
  grid-template-columns: 22px 22px;
  gap: 6px;
  margin: 2px 10px 0 9px;
  text-align: center;
`;

const FadedStep = styled.div`
  opacity: 0.4;
`;

const ArrowButton = styled.button`
  ${inset}
  width: 20px;
  height: 20px;
  margin: 0 1px 2px;
  display: inline-grid;
  place-items: center;
  color: #8a8a8a;
`;

const VoiceBox = styled.div`
  ${inset}
  width: 112px;
  height: 47px;
  display: flex;
  flex-direction: column;
  justify-content: space-between;
  padding: 2px 2px 1px 3px;
`;

const VoiceTitle = styled.div`
  height: 12px;
`;

const VoiceModes = styled.div`
  display: flex;
  justify-content: space-between;
  padding: 0 1px 0 4px;
`;

const ModeButton = styled.button`
  height: 12px;
  padding: 0 1px;
  color: #8a8a8a;

  ${(p) => p.$on && css`
    padding: 0 7px;
    border-radius: 2px;
    background: ${CYAN};
    color: #0a0a0a;
  `}
`;

const VoiceRow = styled.div`
  display: flex;
  align-items: center;
  justify-content: space-between;
  color: #9a9a9a;

  b {
    color: #f0f0f0;
  }
`;

const Panic = styled.button`
  width: 30px;
  height: 12px;
  border: 1px solid #000;
  border-radius: 3px;
  background: #6c2812;
  color: #140500;
  font-size: 9px;
  line-height: 9px;
  font-weight: bold;
`;

const MidiButton = styled.button`
  ${inset}
  width: 36px;
  height: 32px;
  margin-left: 9px;
  color: #858585;
  line-height: 10px;
`;

const HeaderKnobs = styled.div`
  display: grid;
  grid-template-columns: repeat(3, 50px);
  margin: 4px 3px 0 6px;
  text-align: center;
`;

const KnobHit = styled.label`
  position: relative;
  display: inline-block;
  vertical-align: top;
`;

const RangeOverlay = styled.input`
  position: absolute;
  inset: 0;
  width: 100%;
  height: 100%;
  opacity: 0;
  cursor: pointer;
`;

const Meter = styled.div`
  ${inset}
  width: 17px;
  height: 50px;
`;

const HeaderSlots = styled.div`
  ${raised}
  width: 205px;
  display: flex;
  align-items: flex-start;
  gap: 9px;
  padding: 2px 5px 0 3px;
`;

const Slot = styled.div`
  width: 32px;

  > label {
    margin-left: 2px;
  }
`;

const SlotBox = styled.div`
  ${inset}
  width: 32px;
  height: 24px;
  margin-bottom: 3px;
  display: grid;
  grid-template-columns: 1fr 11px;
  color: #8a8a8a;
  font: bold 12px/14px "Noto Sans", sans-serif;
`;

const SlotToggles = styled.div`
  display: grid;
  border-left: 1px solid #050505;
  font: bold 8px/10px "Noto Sans", sans-serif;
`;

const SlotScope = styled.div`
  flex: 1;
  display: grid;
  gap: 5px;
  margin: 4px 0 0 -4px;
`;

const Body = styled.div`
  flex: 1;
  display: flex;
`;

const ToolStrip = styled.aside`
  ${raised}
  width: 39px;
  display: flex;
  flex-direction: column;
  align-items: center;
  gap: 13px;
  padding: 7px 0;
`;

const ToolGroup = styled.div`
  ${inset}
  width: 25px;
  padding: ${(p) => p.$pad || 0}px 0;
`;

const ToolButton = styled.button`
  width: 23px;
  height: ${(p) => p.$h}px;
  display: grid;
  place-items: center;
  color: #868686;

  svg {
    border-radius: 2px;
    color: ${(p) => (p.$on ? '#16262b' : 'inherit')};
    background: ${(p) => (p.$on ? CYAN : 'none')};
  }
`;

const Stage = styled.section`
  flex: 1;
  min-width: 0;
  display: flex;
  flex-direction: column;
  padding: 8px 3px 1px 10px;
`;

const Tracks = styled.div`
  flex: 1;
  display: grid;
  grid-template-rows: repeat(4, minmax(120px, 1fr));
  gap: 9px;
  margin-right: 21px;
`;

const Track = styled.div`
  position: relative;
  border: 1px solid ${(p) => (p.$selected ? '#e6e6e6' : '#000')};
  box-shadow: 1px 2px 4px rgba(0, 0, 0, 0.4);
`;

const SpectroSvg = styled.svg`
  position: absolute;
  inset: 0;
  width: 100%;
  height: 100%;
`;

const LoopBar = styled.div`
  ${inset}
  height: 20px;
  display: flex;
  align-items: center;
  margin: 11px 21px 0 0;
`;

const LoopField = styled.div`
  display: flex;
  align-items: center;
`;

const LoopLabel = styled.span`
  width: ${(p) => p.$w}px;
  text-align: right;
  white-space: nowrap;
`;

const NudgeButtons = styled.span`
  display: flex;
  gap: 4px;
  margin-left: 9px;
  color: #a5a5a5;

  button {
    display: block;
  }
`;

const LoopValue = styled.span`
  width: 46px;
  padding-left: ${(p) => (p.$wide ? 6 : 9)}px;
  color: #9a9a9a;
`;

const DockTop = styled.div`
  position: relative;
  z-index: 1;
  height: 13px;
  display: flex;
  justify-content: space-between;
  margin: 10px 21px 0 7px;
`;

const DockTabs = styled.div`
  width: 220px;
  height: 15px;
  display: flex;
  align-items: flex-end;
  padding-left: 14px;
  background: #333331;
  clip-path: polygon(9px 0, 211px 0, 100% 100%, 0 100%);
`;

const heading = css`
  font: bold 11px/14px "Noto Sans", sans-serif;
  color: #dcdcdc;
`;

const DockTab = styled.a`
  ${heading}
  display: flex;
  align-items: center;
  gap: 9px;
  height: 11px;
  font-size: 10px;
`;

const TabRule = styled.span`
  width: 2px;
  height: 10px;
  margin: 0 10px 0 8px;
  background: #1c1c1c;
`;

const ViewMix = styled.div`
  height: 6px;
  display: flex;
  align-items: center;
  gap: 5px;
`;

const MixSlider = styled.input`
  appearance: none;
  width: 98px;
  height: 15px;

  &::-webkit-slider-runnable-track {
    height: 4px;
    border: 1px solid #050505;
    background: #8a8a8a;
  }

  &::-webkit-slider-thumb {
    appearance: none;
    width: 11px;
    height: 15px;
    margin-top: -7px;
    border: 1px solid #050505;
    border-radius: 3px;
    background: linear-gradient(90deg, #2c2c2c 3px, ${CYAN} 3px 4px, #2c2c2c 4px 5px, ${CYAN} 5px 6px, #2c2c2c 6px);
  }
`;

const Dock = styled.div`
  ${raised}
  height: 82px;
  display: flex;
  margin-left: -7px;
  padding: 10px 5px 0 4px;
`;

const Wheel = styled.div`
  width: 46px;
`;

const WheelRow = styled.div`
  display: flex;
  gap: 3px;
  padding-left: 4px;
`;

const WheelStrip = styled.div`
  width: 12px;
  height: 51px;
  margin-top: 5px;
  border: 1px solid #000;
  border-radius: 3px;
  background: ${(p) => (p.$mid ? 'linear-gradient(transparent 24px, #4a4a4a 24px 25px, transparent 25px),' : '')}
    repeating-linear-gradient(#0c0c0c 0 2px, #252525 2px 3px);
`;

const Bend = styled.div`
  display: flex;
  flex-direction: column;
  justify-content: space-between;
  padding: 7px 0 2px;
`;

const BendButton = styled.button`
  ${inset}
  width: 22px;
  height: 13px;
  color: #35889a;
  font-size: 11px;
  line-height: 10px;
`;

const ModWheel = styled.div`
  width: 24px;

  ${WheelStrip} {
    margin-left: 4px;
  }
`;

const OctaveButton = styled.button`
  align-self: center;
  margin: 14px 2px 0 -2px;
`;

const Keys = styled.div`
  flex: 1;
  min-width: 0;
  height: 64px;
  margin-top: 6px;
  display: flex;
  overflow: clip;
  border: 2px solid #000;
  border-width: 2px 2px 0 3px;
  background: #000;
`;

const WhiteKey = styled.button`
  position: relative;
  flex: none;
  width: 18px;
  height: 62px;
  border-right: 3px solid #000;
  background: #dadada;
`;

const BlackKey = styled.span`
  position: absolute;
  z-index: 1;
  top: 0;
  right: -6px;
  width: 9px;
  height: 39px;
  border: 2px solid #000;
  border-top: 0;
  border-radius: 0 0 3px 3px;
  background: #2e2e2e;
`;

const KeyLabel = styled.span`
  position: absolute;
  right: 0;
  bottom: 2px;
  color: #7c7c7c;
  font: bold 9px/11px "DejaVu Sans", sans-serif;
  white-space: nowrap;
`;

const RootTag = styled.span`
  position: absolute;
  z-index: 2;
  top: 9px;
  left: -5px;
  width: 26px;
  height: 15px;
  border: 1px solid #0a0a0a;
  border-radius: 2px;
  background: ${CYAN};
  box-shadow: 2px 2px 4px rgba(0, 0, 0, 0.6);
  color: #0a0a0a;
  font: bold 10px/12px "DejaVu Sans", sans-serif;

  &::after {
    content: '';
    position: absolute;
    top: 13px;
    left: 8px;
    border: 4px solid transparent;
    border-top-color: ${CYAN};
    border-bottom: 0;
  }
`;

const MapSide = styled.div`
  width: 28px;
  display: flex;
  flex-direction: column;
  align-items: center;
  gap: 1px;
  margin: 2px -5px 0 2px;
`;

const OctaveUp = styled.button`
  margin: 8px 12px 0 0;
`;

const SidePanel = styled.aside`
  ${raised}
  position: relative;
  width: 411px;
  display: flex;
`;

const SideTabs = styled.nav`
  position: absolute;
  top: 13px;
  left: -15px;
  width: 16px;
  height: 194px;
  display: flex;
  flex-direction: column;
  align-items: center;
  gap: 9px;
  padding: 17px 0 0 3px;
  background: #050505;
  clip-path: polygon(100% 0, 100% 100%, 0 182px, 0 11px);

  &::before {
    content: '';
    position: absolute;
    inset: 1px 0 1px 1px;
    background: #333331;
    clip-path: polygon(100% 0, 100% 100%, 0 181px, 0 11px);
  }
`;

const SideTab = styled.a`
  ${heading}
  position: relative;
  display: flex;
  align-items: center;
  gap: 10px;
  writing-mode: vertical-rl;
`;

const SideRule = styled.span`
  position: relative;
  width: 11px;
  height: 2px;
  margin: 7px 0 2px;
  background: #1c1c1c;
`;

const SampleColumn = styled.section`
  width: 205px;
  padding: 0 6px 0 5px;
  border-right: 2px solid #1d1d1d;
`;

const TitleRow = styled.div`
  height: 30px;
  display: flex;
  align-items: center;
  justify-content: space-between;
  padding: 0 1px 0 9px;
`;

const PanelTitle = styled.h2`
  ${heading}
  margin: 0;
  font-size: 12px;
  white-space: nowrap;
`;

const SoloMute = styled.div`
  display: flex;
  gap: 7px;
`;

const SquareButton = styled.button`
  ${inset}
  width: 18px;
  height: 17px;
  color: #7c7c7c;
  font: bold 9px/9px "Noto Sans", sans-serif;
`;

const Rule = styled.hr`
  height: 2px;
  margin: 0;
  border: 0;
  border-top: 1px solid #1f1f1e;
  border-bottom: 1px solid #424240;
`;

const SampleBox = styled.div`
  ${inset}
  height: 115px;
  margin-top: 5px;
  padding: 4px 5px 5px;
  background: #242424;
  box-shadow: 1px 2px 4px rgba(0, 0, 0, 0.4);
`;

const FileRow = styled.div`
  display: flex;
  align-items: center;
  justify-content: space-between;
`;

const FileInput = styled.input`
  ${inset}
  width: 141px;
  height: 17px;
  padding: 0 4px;
  color: ${CYAN};
`;

const FolderButton = styled.button`
  ${inset}
  width: 21px;
  height: 21px;
  display: grid;
  place-items: center;
`;

const OptionRow = styled.div`
  height: 17px;
  margin-top: 6px;
  display: grid;
  grid-template-columns: minmax(0, 1fr) 62px 9px 49px;
  column-gap: 4px;
  align-items: center;
  white-space: nowrap;
`;

const DarkSelect = styled.select`
  ${inset}
  height: 17px;
  padding-right: 4px;
  appearance: none;
  color: ${CYAN};
  text-align: right;
  text-align-last: right;
`;

const RootRow = styled.div`
  display: flex;
  align-items: center;
  margin-top: 7px;
  padding-left: 2px;

  ${DarkButton} {
    width: 76px;
    margin: 12px 0 0 auto;
  }
`;

const RootText = styled.div`
  margin-left: 5px;
`;

const TuneRow = styled.div`
  height: 14px;
  margin: 3px 10px 9px 9px;
  display: flex;
  align-items: center;
  gap: 3px;
  color: #1d1d1d;
  font: 9px/12px "Noto Sans", sans-serif;

  i {
    flex: 1;
    height: 4px;
    border-top: 1px solid #1d1d1d;
  }

  i:first-child {
    border-left: 1px solid #1d1d1d;
  }

  i:last-child {
    border-right: 1px solid #1d1d1d;
  }
`;

const KnobGrid = styled.div`
  display: grid;
  grid-template-columns: 100px 92px;
  row-gap: 19px;
  margin-bottom: 8px;
`;

const Cell = styled.div`
  display: flex;
  height: 71px;
  opacity: ${(p) => (p.$dim ? 0.45 : 1)};
`;

const CellMain = styled.div`
  width: 69px;
  flex: none;
  text-align: center;
`;

const ModSlots = styled.div`
  display: grid;
  grid-template-rows: repeat(3, 17px);
  gap: 8px;
  padding-top: 2px;
`;

const ModSlot = styled.button`
  width: 17px;
  height: 17px;
  border: 1px solid #1f1f1f;
  border-radius: 50%;
  background: #4a4a49;
  color: #1a1a1a;
  font-weight: bold;
  line-height: 12px;

  ${(p) => p.$tag && css`
    width: 21px;
    height: 21px;
    margin: -2px;
    border: 2px solid #b8685c;
    background: #2b2b2b;
    color: #f08b7a;
    font: bold 9px/15px "Noto Sans", sans-serif;
  `}
`;

const EffectTitle = styled.h3`
  ${heading}
  height: 29px;
  margin: 0;
  display: flex;
  align-items: center;
  justify-content: space-between;
  padding-left: 9px;
  white-space: nowrap;
  color: ${(p) => (p.$dim ? '#7b7b79' : '#dcdcdc')};
`;

const EffectGrid = styled.div`
  display: grid;
  grid-template-columns: 100px 92px;
  row-gap: 8px;
`;

const Switches = styled.div`
  display: flex;
  gap: 2px;
  margin-bottom: 1px;
`;

const Power = styled.button`
  width: 13px;
  height: 13px;
  border: 1px solid #000;
  border-radius: 3px;
  background: radial-gradient(circle, #9a9a9a 2px, #151515 3px);
  opacity: ${(p) => (p.$on ? 1 : 0.4)};
`;

const Expand = styled.button`
  ${inset}
  width: 13px;
  height: 13px;
  display: grid;
  place-items: center;
  color: #8a8a8a;
  opacity: ${(p) => (p.$bright ? 1 : 0.45)};

  svg {
    width: 7px;
    height: 6px;
  }
`;

const MasterColumn = styled.section`
  width: 203px;
  padding: 0 0 0 5px;

  > ${Rule} {
    margin-right: 6px;
  }

  ${Cell} {
    margin-left: 2px;
  }
`;

const MasterTop = styled.div`
  height: 43px;
  display: grid;
  grid-template-columns: 117px 28px 1fr;
  gap: 4px;

  ${PanelTitle} {
    padding: 8px 0 8px 9px;
  }

  > div:last-child {
    padding-top: 10px;
  }

  > label {
    padding-top: 7px;
  }
`;

const Screen = styled.div`
  ${inset}
  height: 68px;
  margin: 13px 11px 13px 7px;
`;

const FilterTitle = styled.h3`
  ${heading}
  height: 25px;
  margin: 0;
  display: flex;
  align-items: center;
  gap: 5px;
`;

const FilterRow = styled.div`
  height: 22px;
  display: grid;
  grid-template-rows: 22px;
  grid-template-columns: 98px 9px 28px 1fr;
  align-items: center;
  gap: 4px;
  margin-bottom: 11px;
  padding-left: 7px;
  opacity: 0.5;
`;

const FxSwitch = styled.div`
  ${inset}
  display: flex;
  align-items: center;
  gap: 6px;
  height: 18px;
  margin-right: 3px;
  padding: 0 3px 0 8px;
  font-weight: bold;

  ${ModeButton} {
    padding: 0 1px;
    font: bold 10px/11px Lato, sans-serif;
  }
`;
